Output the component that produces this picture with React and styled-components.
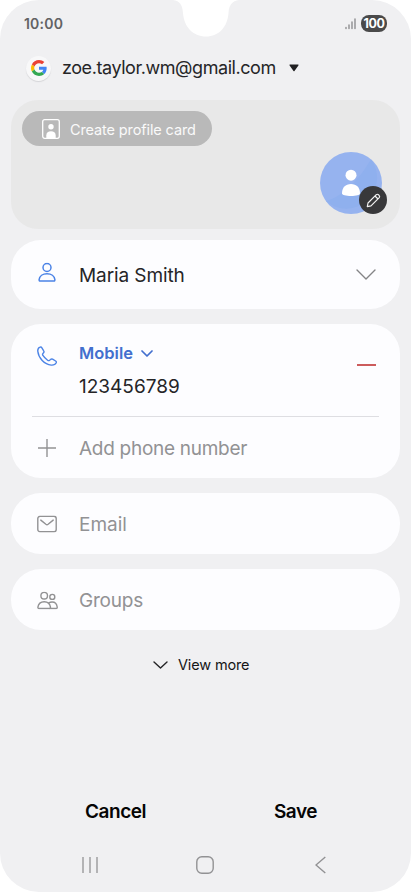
import React from 'react'
import styled, { createGlobalStyle } from 'styled-components'

const GlobalStyle = createGlobalStyle`
  * {
    box-sizing: border-box;
  }
  body {
    margin: 0;
    background: #fff;
    font-family: Inter, Roboto, sans-serif;
  }
  button {
    font-family: inherit;
    border: 0;
    padding: 0;
    background: none;
  }
  svg {
    display: block;
    flex: none;
  }
`

const Screen = styled.div`
  position: relative;
  display: flex;
  flex-direction: column;
  width: 411px;
  height: 892px;
  background: #f0f0f2;
  border-radius: 39px;
  overflow: hidden;
`

const Notch = styled.svg`
  position: absolute;
  top: 0;
  left: 170px;
`

const Text = styled.span`
  font-size: ${(p) => p.$size || 19}px;
  font-weight: ${(p) => p.$weight || 400};
  letter-spacing: ${(p) => p.$spacing || 0}px;
  color: ${(p) => p.$color || '#252527'};
  line-height: 24px;
  white-space: nowrap;
`

const FieldText = styled(Text)`
  padding-top: 2px;
`

const StatusBar = styled.header`
  display: flex;
  align-items: center;
  justify-content: space-between;
  height: 47px;
  padding: 0 24px;
`

const StatusIcons = styled.div`
  display: flex;
  align-items: center;
  gap: 5px;
`

const Battery = styled.div`
  display: flex;
  align-items: center;
  justify-content: center;
  width: 26px;
  height: 17px;
  border-radius: 8px;
  background: #4a4a4a;
`

const Account = styled.div`
  display: flex;
  align-items: center;
  height: 42px;
  padding-left: 26px;
`

const GoogleBadge = styled.div`
  display: flex;
  align-items: center;
  justify-content: center;
  width: 25px;
  height: 25px;
  margin-right: 11px;
  border-radius: 50%;
  background: #f8f8f9;
  box-shadow: 0 1px 1px #d5d5d8;
`

const Caret = styled.svg`
  margin-left: 13px;
`

const Profile = styled.section`
  display: flex;
  justify-content: space-between;
  height: 129px;
  margin: 11px 11px 0;
  padding: 11px 18px 15px 11px;
  border-radius: 27px;
  background: #e8e8e8;
`

const CreateCard = styled.button`
  display: flex;
  align-items: center;
  gap: 10px;
  width: 190px;
  height: 35px;
  padding-left: 20px;
  border-radius: 18px;
  background: #b9b9b9;
`

const Avatar = styled.div`
  position: relative;
  align-self: flex-end;
  width: 62px;
  height: 62px;
`

const EditBadge = styled.div`
  position: absolute;
  right: -5px;
  bottom: 0;
  display: flex;
  align-items: center;
  justify-content: center;
  width: 28px;
  height: 28px;
  border-radius: 50%;
  background: #38383a;
`

const Card = styled.section`
  margin: ${(p) => p.$gap || 15}px 11px 0;
  border-radius: 30px;
  background: #fdfdff;
`

const Row = styled.div`
  display: flex;
  align-items: center;
  height: ${(p) => p.$height}px;
  padding: 0 24px;
`

const IconSlot = styled.div`
  display: flex;
  justify-content: center;
  width: 24px;
  margin-right: 20px;
  transform: translateY(${(p) => p.$shift || 0}px);
`

const Trailing = styled.div`
  margin-left: auto;
`

const PhoneEntry = styled.div`
  display: flex;
  align-items: flex-start;
  height: 92px;
  padding: 17px 24px 0;
`

const PhoneFields = styled.div`
  display: flex;
  flex-direction: column;
  gap: 8px;
`

const TypeSelect = styled.div`
  display: flex;
  align-items: center;
  gap: 8px;
`

const RemoveButton = styled.button`
  width: 19px;
  height: 2px;
  margin: 23px 0 0 auto;
  background: #cc5c5c;
`

const Divider = styled.div`
  height: 1px;
  margin: 0 21px;
  background: #dedee2;
`

const ViewMore = styled.button`
  display: flex;
  align-items: center;
  gap: 10px;
  height: 24px;
  margin: 23px 0 0 153px;
`

const Actions = styled.footer`
  display: grid;
  grid-template-columns: 180px 180px;
  justify-content: center;
  height: 24px;
  margin-top: auto;
`

const NavBar = styled.nav`
  display: grid;
  grid-template-columns: repeat(3, 115px);
  justify-content: center;
  justify-items: center;
  align-items: center;
  height: 42px;
  margin: 20px 1px 6px 0;
`

function GoogleLogo() {
  return (
    <svg width="16" height="16" viewBox="0 0 48 48">
      <path fill="#EA4335" d="M24 9.5c3.54 0 6.71 1.22 9.21 3.6l6.85-6.85C35.9 2.38 30.47 0 24 0 14.62 0 6.51 5.38 2.56 13.22l7.98 6.19C12.43 13.72 17.74 9.5 24 9.5z" />
      <path fill="#4285F4" d="M46.98 24.55c0-1.57-.15-3.09-.38-4.55H24v9.02h12.94c-.58 2.96-2.26 5.48-4.78 7.18l7.73 6c4.51-4.18 7.09-10.36 7.09-17.65z" />
      <path fill="#FBBC05" d="M10.53 28.59A14.5 14.5 0 0 1 9.77 24c0-1.6.27-3.14.76-4.59l-7.98-6.19A23.9 23.9 0 0 0 0 24c0 3.88.92 7.54 2.56 10.78l7.97-6.19z" />
      <path fill="#34A853" d="M24 48c6.48 0 11.93-2.13 15.89-5.81l-7.73-6c-2.15 1.45-4.92 2.3-8.16 2.3-6.26 0-11.57-4.22-13.47-9.91l-7.98 6.19C6.51 42.62 14.62 48 24 48z" />
    </svg>
  )
}

function Chevron({ width, height, stroke, weight = 1.4 }) {
  return (
    <svg width={width} height={height} viewBox={`0 0 ${width} ${height}`} fill="none" stroke={stroke} strokeWidth={weight} strokeLinecap="round" strokeLinejoin="round">
      <path d={`M1 1 L${width / 2} ${height - 1} L${width - 1} 1`} />
    </svg>
  )
}

function PersonIcon() {
  return (
    <svg width="18" height="20" viewBox="0 0 18 20" fill="none" stroke="#4b83e6" strokeWidth="1.5" strokeLinejoin="round">
      <circle cx="9" cy="5" r="4" />
      <path d="M2.2 18.5 C1.4 18.5 1 18 1.1 17.2 C1.5 13.6 4.8 11.2 9 11.2 S16.5 13.6 16.9 17.2 C17 18 16.6 18.5 15.8 18.5 Z" />
    </svg>
  )
}

function PhoneIcon() {
  return (
    <svg width="20" height="20" viewBox="0 0 20 20" fill="none" stroke="#4b83e6" strokeWidth="1.4" strokeLinejoin="round" strokeLinecap="round">
      <path d="M3.1 1.2 C1.6 1.7 .6 3.3 .8 5.3 C1.5 12.1 7.4 18.5 14.2 19.1 C16.6 19.3 18.5 18.2 19.2 16.8 C19.5 16.1 19.2 15.4 18.6 15 L15.6 13.2 C14.8 12.7 14.1 12.9 13.5 13.5 L12.6 14.3 C12 14.8 11.3 14.7 10.6 14.2 C8.7 12.8 7.1 11.2 5.9 9.4 C5.4 8.7 5.5 8 6 7.4 L6.6 6.7 C7.1 6.1 7.1 5.4 6.7 4.8 L4.9 1.8 C4.5 1.2 3.8 .9 3.1 1.2 Z" />
    </svg>
  )
}

function MailIcon() {
  return (
    <svg width="20" height="17" viewBox="0 0 20 17" fill="none" stroke="#929294" strokeWidth="1.4" strokeLinecap="round" strokeLinejoin="round">
      <rect x=".8" y=".8" width="18.4" height="15.4" rx="2.3" />
      <path d="M3.8 4.6 L8.9 8.8 Q10 9.6 11.1 8.8 L16.2 4.6" />
    </svg>
  )
}

function GroupIcon() {
  return (
    <svg width="21" height="18" viewBox="0 0 21 18" fill="none" stroke="#929294" strokeWidth="1.4" strokeLinejoin="round">
      <circle cx="7.2" cy="4.2" r="3.3" />
      <circle cx="15.3" cy="5.4" r="2.5" />
      <path d="M2 17 C1.1 17 .8 16.5 .9 15.7 C1.4 12.3 4 10.2 7.2 10.2 S13 12.3 13.5 15.7 C13.6 16.5 13.3 17 12.4 17 Z" />
      <path d="M11.6 11.6 C12.6 10.9 13.8 10.5 15.1 10.5 C17.7 10.5 19.8 12.3 20.2 15.5 C20.3 16.5 20 17 19.1 17 H12.4" />
    </svg>
  )
}

export default function App() {
  const muted = '#929294'

  return (
    <>
      <GlobalStyle />
      <Screen>
        <Notch width="72" height="38" viewBox="0 0 72 38">
          <path fill="#fff" d="M3 0 C10 1 12.5 5 13 13 C14 27 23 36.5 36 36.5 S57.5 27 58.5 13 C59 5 62 1 69 0 Z" />
        </Notch>
        <StatusBar>
          <Text $size={14} $weight={600} $color="#626264" $spacing={0.2}>10:00</Text>
          <StatusIcons>
            <svg width="11" height="12" viewBox="0 0 11 12" fill="none" stroke="#858587" strokeWidth="1.3" strokeLinecap="round">
              <path d="M1 9.5V10.5M4 7V10.5M7 4V10.5M10 1V10.5" />
            </svg>
            <Battery>
              <Text $size={12.5} $weight={700} $color="#fff" $spacing={-0.4}>100</Text>
            </Battery>
          </StatusIcons>
        </StatusBar>

        <Account>
          <GoogleBadge>
            <GoogleLogo />
          </GoogleBadge>
          <Text $size={18} $spacing={-0.43}>zoe.taylor.wm@gmail.com</Text>
          <Caret width="10" height="8" viewBox="0 0 10 8">
            <path d="M1 .5H9Q10 .7 9.4 1.5L5.5 7Q5 7.6 4.5 7L.6 1.5Q0 .7 1 .5Z" fill="#202022" />
          </Caret>
        </Account>

        <Profile>
          <CreateCard>
            <svg width="18" height="20" viewBox="0 0 18 20">
              <rect x=".7" y=".7" width="16.6" height="18.6" rx="2" fill="none" stroke="#fff" strokeWidth="1.3" />
              <circle cx="9" cy="7.7" r="2.7" fill="#fff" />
              <path d="M4.3 19V16.5C4.3 13.5 6.3 12.3 9 12.3S13.7 13.5 13.7 16.5V19Z" fill="#fff" />
            </svg>
            <FieldText $size={14.5} $color="#fafafa" $spacing={-0.12}>Create profile card</FieldText>
          </CreateCard>
          <Avatar>
            <svg width="62" height="62" viewBox="0 0 62 62">
              <circle cx="31" cy="31" r="31" fill="#96b3ef" />
              <path d="M51 7.2A31 31 0 0 1 5.7 49C22 45 39 28 51 7.2Z" fill="#8fb0ee" />
              <circle cx="31" cy="23.2" r="5.5" fill="#fff" />
              <path d="M22 41.5C22 35.5 25.5 32 31 32S40 35.5 40 41.5C40 43 36 44 31 44S22 43 22 41.5Z" fill="#fff" />
            </svg>
            <EditBadge>
              <svg width="15" height="15" viewBox="0 0 15 15" fill="none" stroke="#f2f2f2" strokeWidth="1.2" strokeLinejoin="round">
                <path d="M1.3 13.7L2 10L10.3 1.7Q11.3 .8 12.4 1.7L13.2 2.6Q14.1 3.6 13.2 4.6L5 12.9Z" />
                <path d="M9 3L12 6" />
              </svg>
            </EditBadge>
          </Avatar>
        </Profile>

        <Card $gap={11}>
          <Row $height={69}>
            <IconSlot $shift={-2.5}>
              <PersonIcon />
            </IconSlot>
            <FieldText $spacing={-0.1}>Maria Smith</FieldText>
            <Trailing>
              <Chevron width={20} height={11} stroke="#848486" />
            </Trailing>
          </Row>
        </Card>

        <Card>
          <PhoneEntry>
            <IconSlot $shift={5}>
              <PhoneIcon />
            </IconSlot>
            <PhoneFields>
              <TypeSelect>
                <Text $size={16.5} $weight={600} $color="#426fce">Mobile</Text>
                <Chevron width={12} height={7} stroke="#426fce" weight={1.7} />
              </TypeSelect>
              <FieldText>123456789</FieldText>
            </PhoneFields>
            <RemoveButton aria-label="Remove number" />
          </PhoneEntry>
          <Divider />
          <Row $height={61}>
            <IconSlot>
              <svg width="18" height="18" viewBox="0 0 18 18" stroke={muted} strokeWidth="1.4">
                <path d="M9 0V18M0 9H18" />
              </svg>
            </IconSlot>
            <FieldText $color={muted} $spacing={-0.28}>Add phone number</FieldText>
          </Row>
        </Card>

        <Card>
          <Row $height={61}>
            <IconSlot $shift={0.5}>
              <MailIcon />
            </IconSlot>
            <FieldText $color={muted}>Email</FieldText>
          </Row>
        </Card>

        <Card>
          <Row $height={61}>
            <IconSlot $shift={0.5}>
              <GroupIcon />
            </IconSlot>
            <FieldText $color={muted} $spacing={-0.2}>Groups</FieldText>
          </Row>
        </Card>

        <ViewMore>
          <Chevron width={15} height={8} stroke="#242426" />
          <Text $size={14.5} $color="#151517" $spacing={-0.15}>View more</Text>
        </ViewMore>

        <Actions>
          <button>
            <Text $weight={600} $color="#050505" $spacing={-0.5}>Cancel</Text>
          </button>
          <button>
            <Text $weight={600} $color="#050505" $spacing={-0.5}>Save</Text>
          </button>
        </Actions>
        <NavBar>
          <svg width="16" height="16" viewBox="0 0 16 16" stroke={muted} strokeWidth="1.3">
            <path d="M1 0V16M8 0V16M15 0V16" />
          </svg>
          <svg width="18" height="18" viewBox="0 0 18 18" fill="none" stroke={muted} strokeWidth="1.4">
            <rect x=".8" y=".8" width="16.4" height="16.4" rx="5" />
          </svg>
          <svg width="11" height="18" viewBox="0 0 11 18" fill="none" stroke={muted} strokeWidth="1.4">
            <path d="M10.3 1L1 9L10.3 17" />
          </svg>
        </NavBar>
      </Screen>
    </>
  )
}
